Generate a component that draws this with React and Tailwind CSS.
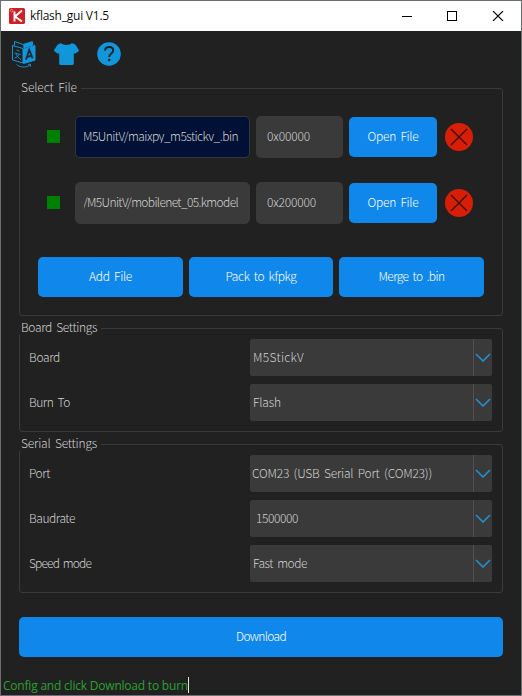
import { useLayoutEffect, useRef, useState } from "react";

// Text whose tracking is adjusted so that it takes a given width.
function Label({ children, width, className = "[word-spacing:2px]" }) {
  const ref = useRef(null);
  const [spacing, setSpacing] = useState(0);
  useLayoutEffect(() => {
    const natural = ref.current.getBoundingClientRect().width;
    setSpacing((width - natural) / children.length);
  }, [children, width]);
  return (
    <span
      ref={ref}
      className={`inline-block shrink-0 whitespace-pre ${className}`}
      style={{ letterSpacing: `${spacing}px` }}
    >
      {children}
    </span>
  );
}

function Group({ title, width, children, className = "" }) {
  return (
    <section className={`relative rounded-[3px] border border-[#3a3a3a] ${className}`}>
      <div className="absolute -top-2 -left-px flex h-3.5 items-center bg-[#212121] pr-1 pb-0.5 pl-[2px] text-[#d0d0d0]">
        <Label width={width}>{title}</Label>
      </div>
      {children}
    </section>
  );
}

function Button({ children, width, className = "" }) {
  return (
    <button
      className={`flex h-10 items-center justify-center rounded-[5px] bg-[#1088eb] pb-0.5 text-white ${className}`}
    >
      <Label width={width}>{children}</Label>
    </button>
  );
}

function FileRow({ path, pathWidth, address, addressWidth, active }) {
  return (
    <div className="flex h-[42px] items-center">
      <div className="mb-px size-[13px] bg-[#008000]" />
      <div
        className={`ml-[15px] flex h-[42px] w-[175px] items-center rounded-[5px] border px-2 pb-0.5 ${
          active ? "border-[#34363d] bg-[#001135]" : "border-[#3a3a3a] bg-[#3a3a3a]"
        }`}
      >
        <div className="flex w-full justify-end overflow-hidden pr-[3px] text-[#d0d0d0]">
          <Label width={pathWidth}>{path}</Label>
        </div>
      </div>
      <div className="ml-1.5 flex h-[42px] w-[87px] items-center rounded-[5px] bg-[#3a3a3a] pb-0.5 pl-[11px] text-[#d0d0d0]">
        <Label width={addressWidth}>{address}</Label>
      </div>
      <Button width={51} className="ml-1.5 w-[88px]">
        Open File
      </Button>
      <svg className="ml-2 size-7" viewBox="0 0 28 28">
        <circle cx="14" cy="14" r="14" fill="#d81e06" />
        <path d="M6 6l16 16M22 6L6 22" stroke="#3a1310" strokeWidth="1.4" />
      </svg>
    </div>
  );
}

function SelectRow({ label, labelWidth, value, valueWidth, indent = "pl-[3px]" }) {
  return (
    <div className="flex h-[37px] items-center justify-between text-[#d0d0d0]">
      <div className="flex pb-px">
        <Label width={labelWidth}>{label}</Label>
      </div>
      <div className="flex h-[37px] w-[242px] rounded-[2px] bg-[#3a3a3a]">
        <div className={`flex flex-1 items-center border-r border-[#574f4f] pb-px ${indent}`}>
          <Label width={valueWidth}>{value}</Label>
        </div>
        <div className="flex w-[18px] items-center justify-center">
          <svg className="h-[9px] w-[16px]" viewBox="0 0 16 9" fill="none">
            <path d="M1 1l7 7 7-7" stroke="#2390d2" strokeWidth="1.6" />
          </svg>
        </div>
      </div>
    </div>
  );
}

function TranslateIcon() {
  return (
    <svg className="h-[28px] w-[25px]" viewBox="0 0 25 28" fill="none" stroke="#1296db" strokeWidth="1">
      <path d="M1.500 5.500l10.500 3v14.500L1.500 20z" />
      <path d="M3.500 5.500V1.500l8.700 3 9.300-3" />
      <path d="M12.500 9L24 5.500v14.700l-11.500 3.300z" fill="#1296db" />
      <path d="M12.200 4.500l9.800-3v4l-9.500 3z" fill="#1296db" stroke="none" />
      <path d="M5.500 10l3 1.200M3.500 13l6 1.500M8 14.500c-1 2-2.500 3-4.500 3.500M5 14c1 2 2.500 4 5 5.500" strokeWidth=".9" />
      <path d="M15 19.800L18.200 10l3.500 8.300M16 17l4.800-1.300" stroke="#1b2a33" strokeWidth="1.900" />
      <path d="M5.500 24.500c3 3 10 3.500 13.500.5M17 24.500l2.500-.3-.2 2.500" strokeWidth=".9" />
    </svg>
  );
}

export default function App() {
  return (
    <div className="flex h-[696px] w-[522px] flex-col border border-[#6c6f70] bg-[#212121] font-['Noto_Sans_CJK_JP','Liberation_Sans',sans-serif] text-[12px] leading-[14px] font-light">
      <header className="flex h-[30px] shrink-0 items-center bg-white">
        <svg className="ml-2 size-4" viewBox="0 0 16 16">
          <rect width="16" height="16" rx="1.500" fill="#cf1f27" />
          <path d="M5.500 3.500V13.500M13 2.500L6 8.500l7 5" stroke="#fff" strokeWidth="1.900" fill="none" />
          <circle cx="2.700" cy="2.700" r="1.300" fill="none" stroke="#f0a0a0" strokeWidth=".7" />
        </svg>
        <Label width={79} className="ml-[5px] font-['Open_Sans','Noto_Sans',sans-serif] font-normal text-[#111]">
          kflash_gui V1.5
        </Label>
        <svg className="ml-auto h-[10px] w-[102px]" viewBox="0 0 102 10" fill="none" stroke="#000" shapeRendering="crispEdges">
          <path d="M0 5.500h10" />
          <rect x="45.500" y=".5" width="9" height="9" />
          <path d="M91 0l10 10M101 0l-10 10" shapeRendering="auto" strokeWidth="1.100" />
        </svg>
        <div className="w-[17px]" />
      </header>

      <nav className="flex h-[45px] shrink-0 items-center pl-[10px]">
        <TranslateIcon />
        <svg className="ml-[18px] h-[22px] w-[25px]" viewBox="0 0 25 22" fill="#1296db">
          <path d="M7.500.3c1.500 2.200 8.500 2.200 10 0 2 .2 3.500.9 4.500 2.200l2.700 4.300c.4.700.2 1.200-.4 1.600l-2.600 1.800c-.7.500-1.300.4-1.900-.2v10.500c0 .9-.5 1.400-1.400 1.400H6.600c-.9 0-1.400-.5-1.400-1.400V10c-.6.600-1.200.7-1.900.2L.7 8.400C.1 8-.1 7.500.3 6.800L3 2.500C4 1.200 5.500.5 7.500.3z" />
        </svg>
        <svg className="ml-[18px] size-6" viewBox="0 0 24 24" fill="none">
          <circle cx="12" cy="12" r="11.800" fill="#1296db" />
          <path d="M8 8.700c.2-2.500 1.900-3.700 4.100-3.700 2.300 0 4.100 1.300 4.100 3.400 0 3-4 3.100-4 6.600" stroke="#212121" strokeWidth="1.900" />
          <circle cx="12.200" cy="18" r="1.300" fill="#212121" />
        </svg>
      </nav>

      <main className="flex flex-col px-[18px] pt-[12px]">
        <Group title="Select File" width={56} className="h-[228px] px-[18px] pt-[27px]">
          <div className="flex flex-col gap-6 pl-[9px]">
            <FileRow active path="M5UnitV/maixpy_m5stickv_.bin" pathWidth={155} address="0x00000" addressWidth={43} />
            <FileRow path="/M5UnitV/mobilenet_05.kmodel" pathWidth={155} address="0x200000" addressWidth={49} />
          </div>
          <div className="mt-[33px] flex gap-1.5">
            <Button width={43} className="w-[145px]">Add File</Button>
            <Button width={71} className="w-[144px]">Pack to kfpkg</Button>
            <Button width={66} className="w-[145px]">Merge to .bin</Button>
          </div>
        </Group>

        <Group title="Board Settings" width={76} className="mt-3 flex h-[104px] flex-col gap-2 pt-[10px] pr-[10px] pl-[9px]">
          <SelectRow label="Board" labelWidth={31} value="M5StickV" valueWidth={51} />
          <SelectRow label="Burn To" labelWidth={41} value="Flash" valueWidth={28} />
        </Group>

        <Group title="Serial Settings" width={76} className="mt-3 flex h-[149px] flex-col gap-2 pt-[10px] pr-[10px] pl-[9px]">
          <SelectRow label="Port" labelWidth={21} value="COM23 (USB Serial Port (COM23))" valueWidth={180} indent="pl-[2px]" />
          <SelectRow label="Baudrate" labelWidth={46} value="1500000" valueWidth={42} indent="pl-[6px]" />
          <SelectRow label="Speed mode" labelWidth={62} value="Fast mode" valueWidth={54} />
        </Group>

        <Button width={50} className="mt-6 w-full">Download</Button>
      </main>

      <footer className="mt-auto flex h-[19px] items-center pb-[1px] pl-[2px] text-[#27a22f]">
        <Label width={185} className="pt-0.5 font-['Open_Sans','Noto_Sans',sans-serif] font-normal">
          Config and click Download to burn
        </Label>
        <div className="h-4 w-px bg-[#e4e4e4]" />
      </footer>
    </div>
  );
}
